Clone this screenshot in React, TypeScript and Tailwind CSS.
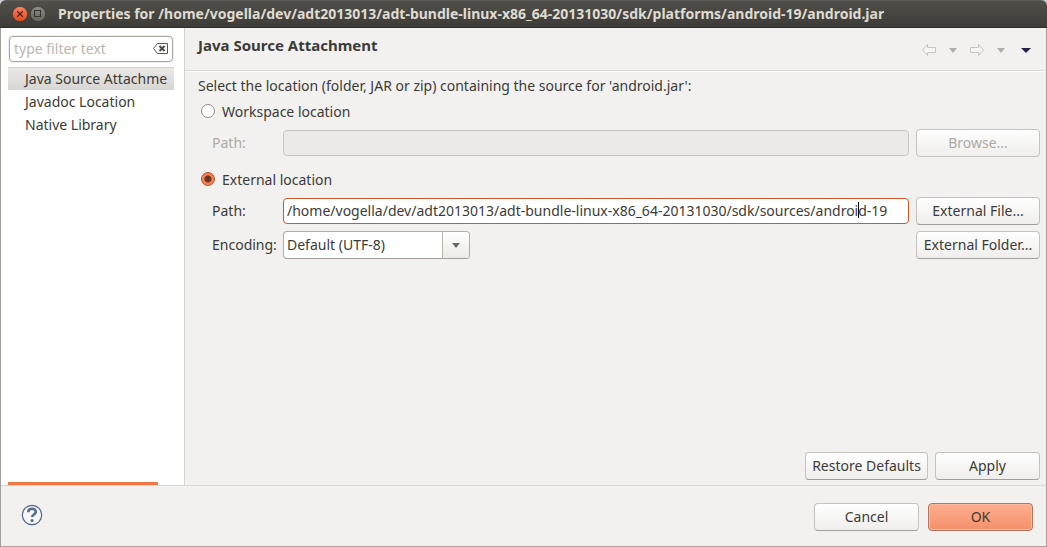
import type { ReactNode } from "react";

const buttonBase =
  "h-7 rounded-[4px] border border-[#c6c3bf] border-b-[#a19d98] bg-linear-to-b from-white to-[#efeeec] px-1 pb-0.5 text-center whitespace-nowrap text-[#3c3b37]";

function Button({ children, className = "", disabled = false }: { children: ReactNode; className?: string; disabled?: boolean }) {
  return (
    <button type="button" disabled={disabled} className={`${buttonBase} ${className}`}>
      {children}
    </button>
  );
}

function WindowButtons() {
  return (
    <div className="flex gap-0.5">
      <button type="button" aria-label="Close" className="size-4">
        <svg viewBox="0 0 16 16" className="size-4">
          <defs>
            <linearGradient id="close" x1="0" y1="0" x2="0" y2="1">
              <stop offset="0" stopColor="#f58463" />
              <stop offset="1" stopColor="#df4b1c" />
            </linearGradient>
          </defs>
          <circle cx="8" cy="8" r="7.6" fill="url(#close)" stroke="#35342f" strokeWidth=".6" />
          <path d="M5.2 5.2l5.6 5.6m0-5.6l-5.6 5.6" stroke="#51200f" strokeWidth="1.3" />
        </svg>
      </button>
      <button type="button" aria-label="Maximize" className="size-4">
        <svg viewBox="0 0 16 16" className="size-4">
          <defs>
            <linearGradient id="maximize" x1="0" y1="0" x2="0" y2="1">
              <stop offset="0" stopColor="#918f86" />
              <stop offset="1" stopColor="#65635c" />
            </linearGradient>
          </defs>
          <circle cx="8" cy="8" r="7.6" fill="url(#maximize)" stroke="#35342f" strokeWidth=".6" />
          <path d="M4.5 4.5h6v6h-6z" fill="none" stroke="#35342f" strokeWidth="1.1" />
        </svg>
      </button>
    </div>
  );
}

function Arrow({ flipped = false }: { flipped?: boolean }) {
  return (
    <svg viewBox="0 0 16 14" className={flipped ? "h-3.5 w-4 -scale-x-100" : "h-3.5 w-4"}>
      <path d="M1.5 7l5-5.5v3h8v5h-8v3z" fill="#f6f5f4" stroke="#c6c4c1" />
    </svg>
  );
}

function Triangle({ className }: { className: string }) {
  return (
    <svg viewBox="0 0 8 5" preserveAspectRatio="none" className={className}>
      <path d="M0 0h8L4 5z" fill="currentColor" />
    </svg>
  );
}

function Sidebar() {
  const pages = ["Java Source Attachme", "Javadoc Location", "Native Library"];
  return (
    <aside className="flex w-[184px] shrink-0 flex-col border-r border-[#d5d3d0] bg-white pt-2 pr-2.5 pl-[7px]">
      <div className="mx-px flex h-[26px] items-center rounded-[4px] border border-[#aaa69f] bg-white px-1 pb-px shadow-[0_0_0_1px_#f0efed]">
        <input
          type="text"
          aria-label="Filter pages"
          placeholder="type filter text"
          className="min-w-0 flex-1 bg-transparent outline-none placeholder:text-[#bbb6b0]"
        />
        <button type="button" aria-label="Clear filter" className="shrink-0">
          <svg viewBox="0 0 15 11" className="h-[11px] w-[15px]">
            <path d="M4.5.5h10v10h-10l-4-5z" fill="#fff" stroke="#5a5a57" />
            <path d="M6.5 3l5 5m0-5l-5 5" stroke="#4a4a47" strokeWidth="2" />
          </svg>
        </button>
      </div>
      <nav className="mt-[5px] flex flex-col">
        {pages.map((page, i) => (
          <a
            key={page}
            href="#"
            className={`block h-[23px] pl-[17px] leading-6 whitespace-nowrap ${
              i === 0 ? "bg-linear-to-b from-[#ebeae8] to-[#d8d6d3] shadow-[inset_0_1px_0_0_#d3d1ce]" : ""
            }`}
          >
            {page}
          </a>
        ))}
      </nav>
      <div className="mt-auto h-[3px] w-[150px] bg-[#f07746]" />
    </aside>
  );
}

function Radio({ label, id, checked = false }: { label: string; id: string; checked?: boolean }) {
  return (
    <label htmlFor={id} className="flex h-6 items-center gap-[7px] pl-[3px]">
      <input
        id={id}
        type="radio"
        name="location"
        defaultChecked={checked}
        className="size-3.5 appearance-none rounded-full border border-[#8f8b85] bg-white checked:border-[#b5502b] checked:bg-[radial-gradient(circle,#6b3522_0_3px,#f47f52_4px)]"
      />
      {label}
    </label>
  );
}

const rowGrid = "grid grid-cols-[71px_minmax(0,1fr)_124px] items-center pl-3.5";

export default function App() {
  return (
    <div className="flex h-screen flex-col overflow-hidden bg-[#c9cdd2] font-['Noto_Sans','Open_Sans',sans-serif] text-[14px] text-[#3c3b37]">
      <header className="flex h-7 shrink-0 items-center gap-3 rounded-t-[6px] border-t border-b border-t-[#5c5b55] border-b-[#2e2d29] bg-linear-to-b from-[#504f49] to-[#3d3c38] pl-3 text-[#dfdbd2]">
        <WindowButtons />
        <h1 className="truncate pb-px font-bold">
          Properties for /home/vogella/dev/adt2013013/adt-bundle-linux-x86_64-20131030/sdk/platforms/android-19/android.jar
        </h1>
      </header>
      <div className="flex min-h-0 flex-1 flex-col border-x border-b border-[#a5a09a] bg-[#f2f1f0]">
        <div className="flex min-h-0 flex-1">
          <Sidebar />
          <main className="flex min-w-0 flex-1 flex-col">
            <div className="flex h-[43px] shrink-0 items-center justify-between border-b border-[#dad8d5] pr-[15px] pl-[13px]">
              <h2 className="pb-[7px] text-[15px] font-bold">Java Source Attachment</h2>
              <div className="flex items-center pt-0.5">
                <button type="button" aria-label="Back" disabled>
                  <Arrow />
                </button>
                <button type="button" aria-label="Back history" disabled className="ml-3 text-[#b0aeab]">
                  <Triangle className="h-[5px] w-[8px]" />
                </button>
                <button type="button" aria-label="Forward" disabled className="ml-3">
                  <Arrow flipped />
                </button>
                <button type="button" aria-label="Forward history" disabled className="ml-3 text-[#b0aeab]">
                  <Triangle className="h-[5px] w-[8px]" />
                </button>
                <button type="button" aria-label="Menu" className="ml-4 text-[#25224a]">
                  <Triangle className="h-[5px] w-[10px]" />
                </button>
              </div>
            </div>
            <form className="flex flex-1 flex-col border-t border-white pt-[3px] pr-1.5 pb-[5px] pl-[13px]">
              <p className="h-6 leading-[22px]">Select the location (folder, JAR or zip) containing the source for 'android.jar':</p>
              <Radio id="workspace" label="Workspace location" />
              <div className={`${rowGrid} mt-1.5`}>
                <label htmlFor="workspace-path" className="pb-0.5 text-[#aeaaa5]">
                  Path:
                </label>
                <input
                  id="workspace-path"
                  type="text"
                  disabled
                  className="mr-[7px] h-[26px] min-w-0 rounded-[4px] border border-[#c9c6c2] bg-[#ebeae9] px-1"
                />
                <Button disabled className="border-b-[#c6c3bf] from-[#f6f5f4] text-[#aeaaa5]">
                  Browse...
                </Button>
              </div>
              <div className="mt-2.5">
                <Radio id="external" label="External location" checked />
              </div>
              <div className={`${rowGrid} mt-1.5`}>
                <label htmlFor="external-path" className="pb-0.5">
                  Path:
                </label>
                <div className="relative mr-[7px] flex">
                  <input
                    id="external-path"
                    type="text"
                    defaultValue="/home/vogella/dev/adt2013013/adt-bundle-linux-x86_64-20131030/sdk/sources/android-19"
                    className="h-[26px] min-w-0 flex-1 rounded-[4px] border border-[#d4562b] bg-white px-[3px] pb-0.5 outline-none"
                  />
                  <span className="absolute top-1 left-[575px] h-4 w-px bg-black" />
                </div>
                <Button>External File...</Button>
              </div>
              <div className={`${rowGrid} mt-1.5`}>
                <label htmlFor="encoding" className="pb-0.5">
                  Encoding:
                </label>
                <div className="relative w-[187px]">
                  <select
                    id="encoding"
                    className="block h-7 w-full appearance-none rounded-[4px] border border-[#b0aca7] border-b-[#a19d98] bg-white pb-0.5 pl-[3px] outline-none"
                  >
                    <option>Default (UTF-8)</option>
                  </select>
                  <span className="pointer-events-none absolute inset-y-px right-px flex w-[27px] items-center justify-center rounded-r-[3px] border-l border-[#b8b5b0] bg-linear-to-b from-white to-[#ebeae8] text-[#6c6a66]">
                    <Triangle className="h-[5px] w-[8px]" />
                  </span>
                </div>
                <Button>External Folder...</Button>
              </div>
              <div className="mt-auto flex justify-end gap-[7px]">
                <Button className="w-[123px]">Restore Defaults</Button>
                <Button className="w-[105px]">Apply</Button>
              </div>
            </form>
          </main>
        </div>
        <footer className="flex h-[61px] shrink-0 items-center justify-between border-t border-[#dad8d5] pr-[13px] pl-5">
          <button type="button" aria-label="Help" className="pb-0.5">
            <svg viewBox="0 0 22 22" className="size-[22px]">
              <circle cx="11" cy="11" r="9.7" fill="#f7f7f8" stroke="#52658c" strokeWidth="1.2" />
              <path d="M7.2 8.2c0-4.5 7.6-4.4 7.6-.4 0 2.8-3.6 2.7-3.6 5.3" fill="none" stroke="#566a94" strokeWidth="2.6" />
              <circle cx="11.1" cy="16.5" r="1.6" fill="#566a94" />
            </svg>
          </button>
          <div className="flex gap-[9px] pt-0.5">
            <Button className="w-[105px]">Cancel</Button>
            <button
              type="submit"
              className="h-7 w-[105px] rounded-[4px] border border-[#b5745c] bg-linear-to-b from-[#ffae90] to-[#f4906a] pb-0.5 text-center shadow-[inset_0_0_0_1px_#ffb99f]"
            >
              OK
            </button>
          </div>
        </footer>
      </div>
    </div>
  );
}
